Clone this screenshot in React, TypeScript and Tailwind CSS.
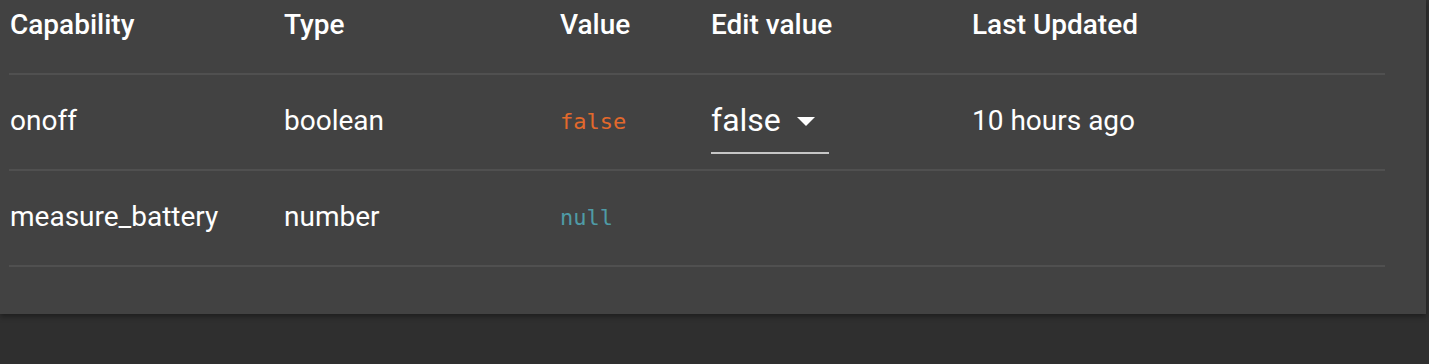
import React from 'react';

const cols = 'grid grid-cols-[275px_276px_151px_261px_1fr] items-center';

function Divider() {
  return <div className="h-[2px] w-full bg-[#505050]" />;
}

function SelectBox({ value }: { value: string }) {
  return (
    <div className="relative flex w-[118px] items-center h-[62px] border-b-2 border-[#c6c6c6] pb-[4px]">
      <span className="text-[32px] leading-none text-white">{value}</span>
      <svg
        className="ml-auto mr-[14px] mt-[2px]"
        width="18"
        height="9"
        viewBox="0 0 18 9"
      >
        <path d="M0 0h18L9 9z" fill="#ffffff" />
      </svg>
    </div>
  );
}

export default function App() {
  const rows = [
    { cap: 'onoff', type: 'boolean', value: 'false', color: 'text-[#e2692c]', edit: true, updated: '10 hours ago' },
    { cap: 'measure_battery', type: 'number', value: 'null', color: 'text-[#4f9ba6]', edit: false, updated: '' },
  ];

  return (
    <div className="min-h-[364px] w-[1429px] bg-[#2f2f2f] font-['Roboto',sans-serif]">
      <div className="mr-[3px] bg-[#424242] pb-[47px] shadow-[0_3px_5px_rgba(0,0,0,0.35)]">
        <div className="w-[1376px] ml-[9px]">
          {/* header */}
          <div className={`${cols} h-[73px] pb-[23px] text-[28px] font-medium leading-none text-white`}>
            <div className="pl-[1px]">Capability</div>
            <div>Type</div>
            <div>Value</div>
            <div>Edit value</div>
            <div>Last Updated</div>
          </div>
          <Divider />
          {rows.map((r) => (
            <div key={r.cap}>
              <div className={`${cols} h-[94px] text-[28px] leading-none text-white`}>
                <div className="pl-[1px] pb-[2px]">{r.cap}</div>
                <div className="pb-[2px]">{r.type}</div>
                <div className={`font-['DejaVu_Sans_Mono',monospace] text-[22px] ${r.color}`}>{r.value}</div>
                <div className="pt-[2px]">{r.edit && <SelectBox value={r.value} />}</div>
                <div className="pb-[2px]">{r.updated}</div>
              </div>
              <Divider />
            </div>
          ))}
        </div>
      </div>
    </div>
  );
}
